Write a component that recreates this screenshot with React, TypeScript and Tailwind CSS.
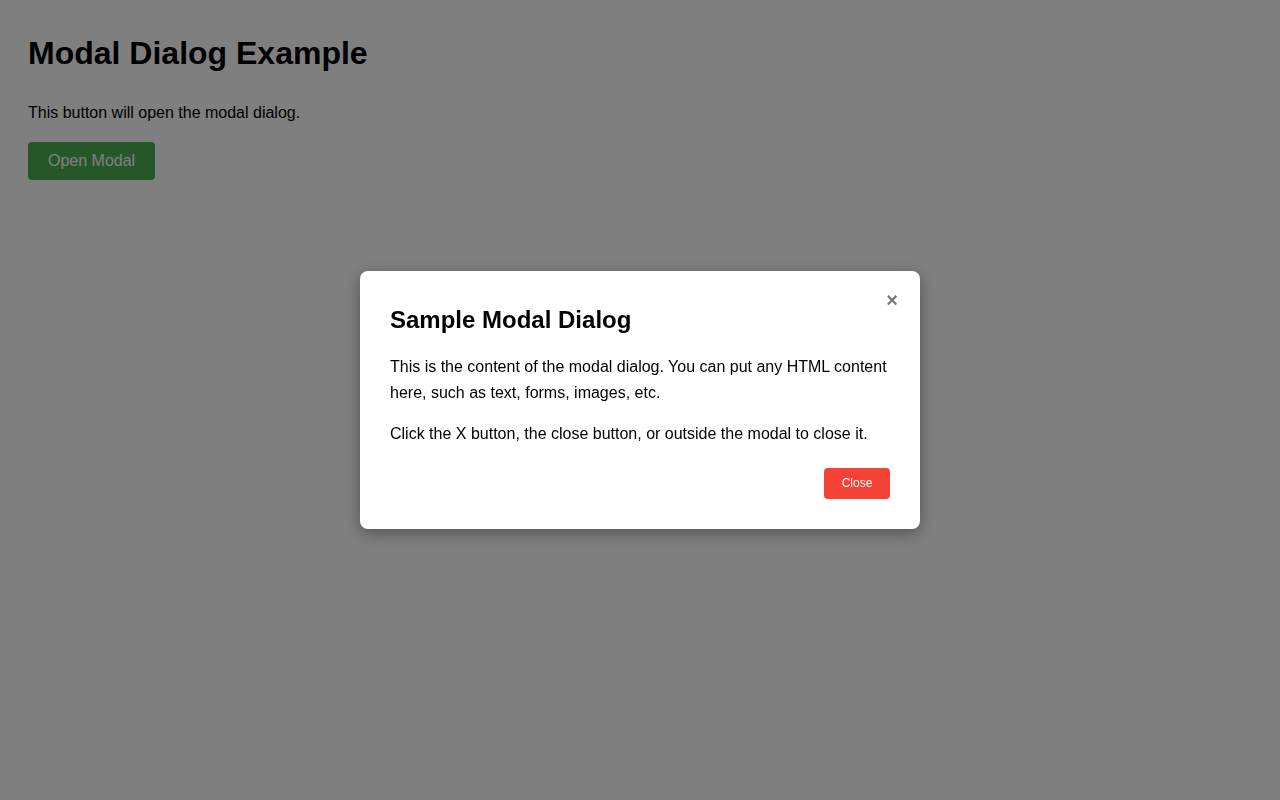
import { useState } from "react";

export default function App() {
  const [open, setOpen] = useState(true);

  return (
    <div className="min-h-screen w-full bg-white p-7 text-black font-['Liberation_Sans',Arial,sans-serif]">
      <h1 className="text-[32px] font-bold leading-[1.15] mt-[7px] mb-[32px]">Modal Dialog Example</h1>
      <p className="text-base leading-[1.15] mb-[20px]">This button will open the modal dialog.</p>
      <button
        onClick={() => setOpen(true)}
        className="bg-[#4caf50] text-white text-base rounded px-5 h-[38px] whitespace-nowrap"
      >
        Open Modal
      </button>

      {open && (
        <div
          className="fixed inset-0 bg-black/50 flex items-center justify-center"
          onClick={() => setOpen(false)}
        >
          <div
            className="relative bg-white w-[560px] rounded-lg px-[30px] pt-[30px] pb-[30px] shadow-[0_4px_16px_rgba(0,0,0,0.35)]"
            onClick={(e) => e.stopPropagation()}
          >
            <button
              onClick={() => setOpen(false)}
              className="absolute top-[19px] right-[22px] text-[#777] text-xl font-bold leading-none"
            >
              ×
            </button>
            <h2 className="text-2xl font-bold leading-[1.15] mt-[5px] mb-[20px]">Sample Modal Dialog</h2>
            <p className="text-base leading-[26px] mb-[15px]">
              This is the content of the modal dialog. You can put any HTML content here, such as text, forms, images,
              etc.
            </p>
            <p className="text-base leading-[26px]">
              Click the X button, the close button, or outside the modal to close it.
            </p>
            <div className="flex justify-end mt-[21px]">
              <button
                onClick={() => setOpen(false)}
                className="bg-[#f44336] text-white text-xs rounded h-[31px] w-[66px]"
              >
                Close
              </button>
            </div>
          </div>
        </div>
      )}
    </div>
  );
}
